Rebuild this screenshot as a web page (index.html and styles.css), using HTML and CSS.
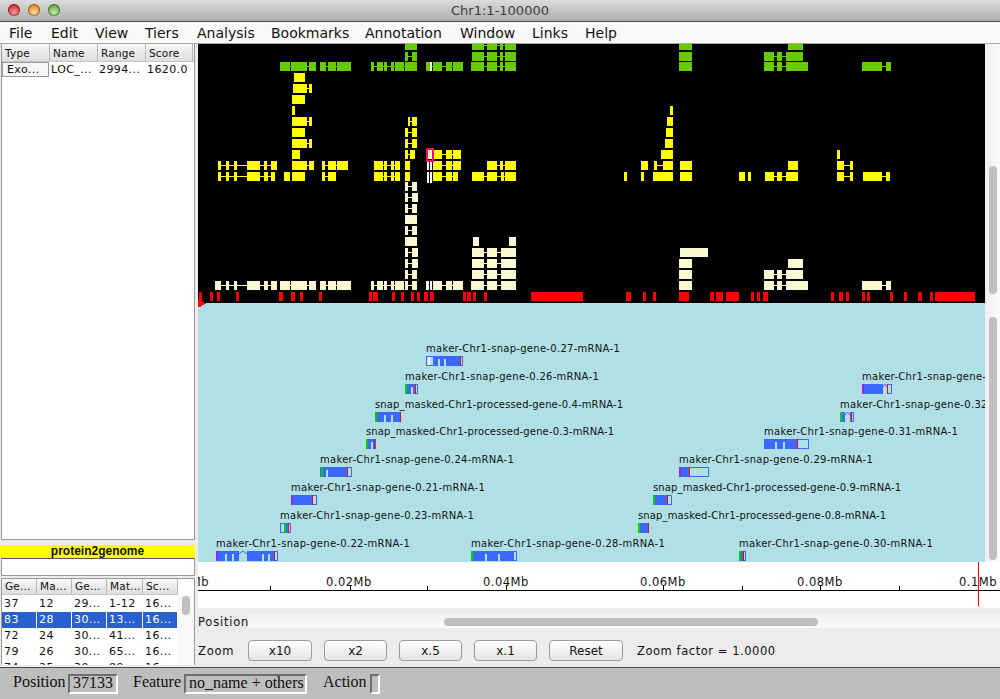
FILE: index.html
```html
<!DOCTYPE html>
<html lang="en">
<head>
    <meta charset="UTF-8">
    <title>Chr1:1-100000</title>
    <link rel="stylesheet" href="styles.css">
</head>
<body>
    <div class="titlebar">
        <div class="lights">
            <span class="light light-red"></span>
            <span class="light light-yellow"></span>
            <span class="light light-green"></span>
        </div>
        <span class="title">Chr1:1-100000</span>
    </div>
    <div class="menubar">
        <span class="menu-item m-file">File</span>
        <span class="menu-item m-edit">Edit</span>
        <span class="menu-item m-view">View</span>
        <span class="menu-item m-tiers">Tiers</span>
        <span class="menu-item m-analysis">Analysis</span>
        <span class="menu-item m-bookmarks">Bookmarks</span>
        <span class="menu-item m-annotation">Annotation</span>
        <span class="menu-item m-window">Window</span>
        <span class="menu-item m-links">Links</span>
        <span class="menu-item m-help">Help</span>
    </div>
    <div class="main">
        <div class="sidebar">
            <div class="panel panel-features">
                <div class="thead">
                    <span class="th col-a">Type</span>
                    <span class="th col-b">Name</span>
                    <span class="th col-c">Range</span>
                    <span class="th col-d">Score</span>
                </div>
                <div class="row">
                    <span class="cell cell-a cell-focus">Exo...</span>
                    <span class="cell col-b">LOC_...</span>
                    <span class="cell col-c">2994...</span>
                    <span class="cell col-d">1620.0</span>
                </div>
            </div>
            <div class="type-label">protein2genome</div>
            <div class="type-box"></div>
            <div class="panel panel-matches">
                <div class="thead">
                    <span class="th col-1">Ge...</span>
                    <span class="th col-2">Ma...</span>
                    <span class="th col-3">Ge...</span>
                    <span class="th col-4">Mat...</span>
                    <span class="th col-5">Sc...</span>
                </div>
                <div class="match-body">
                    <div class="match-rows">
                        <div class="row"><span class="cell col-1">37</span><span class="cell col-2">12</span><span class="cell col-3">29...</span><span class="cell col-4">1-12</span><span class="cell col-5">16...</span></div>
                        <div class="row row-sel"><span class="cell col-1">83</span><span class="cell col-2">28</span><span class="cell col-3">30...</span><span class="cell col-4">13...</span><span class="cell col-5">16...</span></div>
                        <div class="row"><span class="cell col-1">72</span><span class="cell col-2">24</span><span class="cell col-3">30...</span><span class="cell col-4">41...</span><span class="cell col-5">16...</span></div>
                        <div class="row"><span class="cell col-1">79</span><span class="cell col-2">26</span><span class="cell col-3">30...</span><span class="cell col-4">65...</span><span class="cell col-5">16...</span></div>
                        <div class="row"><span class="cell col-1">74</span><span class="cell col-2">25</span><span class="cell col-3">30...</span><span class="cell col-4">89...</span><span class="cell col-5">16...</span></div>
                    </div>
                    <div class="match-scroll"><div class="match-thumb"></div></div>
                </div>
            </div>
        </div>
        <div class="content">
            <div class="tier-row">
                <svg id="results" class="tier" width="787" height="259" viewBox="0 44 787 259"></svg>
                <div class="vscroll vscroll-top"><div class="thumb thumb-top"></div></div>
            </div>
            <div class="tier-row">
                <svg id="genes" class="tier tier-genes" width="787" height="259" viewBox="198 303 787 259"></svg>
                <div class="vscroll vscroll-bottom"><div class="thumb thumb-bottom"></div></div>
            </div>
            <svg id="ruler" class="ruler" width="802" height="46" viewBox="198 562 802 46">
                <text class="tick-label" x="171" y="586">0.0Mb</text>
                <text class="tick-label" x="326" y="586">0.02Mb</text>
                <text class="tick-label" x="483" y="586">0.04Mb</text>
                <text class="tick-label" x="640" y="586">0.06Mb</text>
                <text class="tick-label" x="797" y="586">0.08Mb</text>
                <text class="tick-label" x="959" y="586">0.1Mb</text>
                <rect class="axis" x="198" y="590" width="802" height="1"/>
                <rect class="axis" x="270" y="586" width="1" height="4"/>
                <rect class="axis" x="350" y="585" width="1" height="5"/>
                <rect class="axis" x="427" y="586" width="1" height="4"/>
                <rect class="axis" x="506" y="585" width="1" height="5"/>
                <rect class="axis" x="663" y="585" width="1" height="5"/>
                <rect class="axis" x="742" y="586" width="1" height="4"/>
                <rect class="axis" x="820" y="585" width="1" height="5"/>
                <rect class="axis" x="899" y="586" width="1" height="4"/>
                <rect class="cursor" x="978" y="562" width="1" height="44"/>
            </svg>
            <div class="controls">
                <div class="control-row position-row">
                    <span class="control-label">Position</span>
                    <div class="hscroll"><div class="hthumb"></div></div>
                </div>
                <div class="control-row zoom-row">
                    <span class="control-label">Zoom</span>
                    <button class="btn btn-first">x10</button>
                    <button class="btn">x2</button>
                    <button class="btn">x.5</button>
                    <button class="btn">x.1</button>
                    <button class="btn btn-reset">Reset</button>
                    <span class="zoom-factor">Zoom factor = 1.0000</span>
                </div>
            </div>
        </div>
    </div>
    <div class="statusbar">
        <span class="status-label s-position">Position</span>
        <span class="field field-position">37133</span>
        <span class="status-label s-feature">Feature</span>
        <span class="field field-feature">no_name + others</span>
        <span class="status-label s-action">Action</span>
        <span class="field field-action"></span>
    </div>
    <script src="main.js"></script>
</body>
</html>
```
FILE: styles.css
```css
html, body {
    margin: 0;
    padding: 0;
}
body {
    width: 1000px;
    height: 699px;
    overflow: hidden;
    display: flex;
    flex-direction: column;
    background-color: #ececec;
    font-family: "DejaVu Sans", sans-serif;
    color: #111;
}

/* window title */
.titlebar {
    height: 21px;
    flex: none;
    position: relative;
    display: flex;
    justify-content: center;
    align-items: center;
    background: linear-gradient(#dcdcdc, #aeaeae);
    border-bottom: 1px solid #505050;
}
.lights {
    position: absolute;
    left: 8px;
    top: 4px;
    display: flex;
    gap: 8px;
}
.light {
    width: 12px;
    height: 12px;
    border-radius: 50%;
    box-shadow: inset 0 0 0 1px rgba(0, 0, 0, 0.35);
}
.light-red { background: radial-gradient(circle at 50% 70%, #f4a0a0, #cf2a2f 70%); }
.light-yellow { background: radial-gradient(circle at 50% 70%, #f9dca0, #d98a22 70%); }
.light-green { background: radial-gradient(circle at 50% 70%, #c8eeb0, #5da83f 70%); }
.title {
    font-size: 13px;
    color: #3c3c3c;
}

/* menu */
.menubar {
    height: 21px;
    flex: none;
    display: flex;
    align-items: center;
    background-color: #fafafa;
    border-bottom: 1px solid #a8a8a8;
    font-size: 14px;
}
.menu-item { flex: none; }
.m-file { margin-left: 9px; width: 42px; }
.m-edit { width: 44px; }
.m-view { width: 50px; }
.m-tiers { width: 52px; }
.m-analysis { width: 74px; }
.m-bookmarks { width: 94px; }
.m-annotation { width: 95px; }
.m-window { width: 72px; }
.m-links { width: 53px; }

/* left side */
.main {
    height: 623px;
    flex: none;
    display: flex;
}
.sidebar {
    width: 195px;
    flex: none;
    margin-right: 3px;
    display: flex;
    flex-direction: column;
}
.panel {
    margin-left: 1px;
    background-color: #fff;
    border: 1px solid #9a9a9a;
    overflow: hidden;
    font-size: 11px;
}
.panel-features {
    height: 495px;
    border-top: none;
}
.thead {
    height: 17px;
    display: flex;
    background: linear-gradient(#f8f8f8, #dedede);
    border-bottom: 1px solid #c4c4c4;
    line-height: 19px;
    font-size: 10.5px;
    letter-spacing: 0.2px;
}
.th {
    flex: none;
    box-sizing: border-box;
    padding-left: 3px;
    border-right: 1px solid #b8b8b8;
    white-space: nowrap;
    overflow: hidden;
}
.row {
    height: 16px;
    display: flex;
    line-height: 16px;
}
.cell {
    flex: none;
    box-sizing: border-box;
    padding-left: 2px;
    white-space: nowrap;
    overflow: hidden;
    letter-spacing: 0.4px;
}
.col-a { width: 48px; }
.col-b { width: 48px; }
.col-c { width: 48px; }
.col-d { width: 47px; }
.cell-a { width: 47px; }
.panel-features .cell-focus {
    padding-left: 4px;
    line-height: 13px;
    border: 1px solid #9a9a9a;
    background-color: #f6f6f6;
    height: 15px;
}
.col-1 { width: 35px; }
.col-2 { width: 35px; }
.col-3 { width: 35px; }
.col-4 { width: 36px; }
.col-5 { width: 35px; }
.type-label {
    margin-top: 5px;
    height: 13px;
    flex: none;
    background-color: #ffff00;
    text-align: center;
    font-family: "Liberation Sans", Arial, sans-serif;
    font-size: 12px;
    font-weight: bold;
    line-height: 13px;
}
.type-box {
    height: 16px;
    flex: none;
    margin-left: 1px;
    background-color: #fff;
    border: 1px solid #9a9a9a;
    border-top-color: #555;
}
.panel-matches {
    margin-top: 2px;
    height: 86px;
    flex: none;
    border-bottom: none;
}
.panel-matches .thead {
    height: 15px;
    line-height: 15px;
    margin-right: 16px;
}
.match-body {
    display: flex;
}
.match-rows {
    width: 176px;
    flex: none;
    padding-top: 1px;
}
.row-sel {
    color: #fff;
}
.row-sel .cell {
    background-color: #2a5fcf;
    border-right: 1px solid #fff;
}
.match-scroll {
    flex: 1;
    padding: 1px 0 0 4px;
    background-color: #f8f8f8;
}
.match-thumb {
    width: 8px;
    height: 19px;
    border-radius: 4px;
    background-color: #c0c0c0;
}

/* tiers */
.content {
    width: 802px;
    flex: none;
    display: flex;
    flex-direction: column;
}
.tier-row {
    height: 259px;
    flex: none;
    display: flex;
}
.tier {
    display: block;
    flex: none;
    background-color: #000;
}
.tier-genes {
    background-color: #b0e0e6;
}
.vscroll {
    width: 15px;
    box-sizing: border-box;
    flex: none;
    padding-left: 4px;
    background: linear-gradient(90deg, #f0f0f0, #fafafa);
}
.thumb {
    width: 8px;
    border-radius: 4px;
    background-color: #c0c0c0;
}
.vscroll-top { padding-top: 122px; }
.thumb-top { height: 128px; }
.vscroll-bottom { padding-top: 14px; }
.thumb-bottom { height: 243px; }
.f-green { fill: #66cc00; }
.f-yellow { fill: #ffff00; }
.f-cream { fill: #fafad2; }
.f-red { fill: #ff0000; }
.f-white { fill: #ffffff; }
.f-pink { fill: none; stroke: #ff0066; stroke-width: 2; }
.g-blue { fill: #3b68ff; }
.g-box { fill: none; stroke: #3b68ff; stroke-width: 1; }
.g-chevron { fill: none; stroke: #3b68ff; stroke-width: 1; }
.g-teal { fill: #b0e0e6; }
.g-start-green { fill: #00d000; }
.g-start-purple { fill: #a020f0; }
.g-stop { fill: #ff0000; }
.g-label {
    font-family: "DejaVu Sans", sans-serif;
    font-size: 10px;
    letter-spacing: 0.29px;
    fill: #111;
}
.g-label-snap {
    letter-spacing: 0.14px;
}

/* ruler */
.ruler {
    display: block;
    flex: none;
    background-color: #fff;
}
.tick-label {
    font-family: "DejaVu Sans", sans-serif;
    font-size: 11.5px;
    letter-spacing: 0.5px;
    fill: #111;
}
.axis { fill: #000; }
.cursor { fill: #ff0000; }

/* position and zoom */
.controls {
    flex: 1;
    font-size: 11.5px;
}
.control-row {
    display: flex;
    align-items: center;
}
.position-row {
    height: 14px;
    margin-top: 6px;
}
.position-row .control-label {
    padding-top: 2px;
}
.zoom-row {
    margin-top: 12px;
    height: 21px;
}
.control-label {
    width: 50px;
    flex: none;
    letter-spacing: 0.8px;
}
.hscroll {
    flex: 1;
    height: 14px;
    box-sizing: border-box;
    padding: 4px 0 0 196px;
    background: linear-gradient(#f2f2f2, #fafafa);
}
.hthumb {
    width: 374px;
    height: 8px;
    border-radius: 4px;
    background-color: #bebebe;
}
.btn {
    width: 63px;
    height: 21px;
    box-sizing: border-box;
    flex: none;
    margin: 0 12px 0 0;
    padding: 0;
    border: 1px solid #9c9c9c;
    border-radius: 4px;
    background: linear-gradient(#ffffff, #e4e4e4);
    font-family: "DejaVu Sans", sans-serif;
    font-size: 12px;
    color: #111;
}
.btn-first { width: 64px; }
.btn-reset {
    width: 74px;
    margin-right: 14px;
}
.zoom-factor {
    letter-spacing: 0.55px;
}

/* status line */
.statusbar {
    height: 31px;
    flex: none;
    display: flex;
    align-items: center;
    background-color: #bebebe;
    border-top: 1px solid #4a4a4a;
    font-family: "Liberation Serif", "Times New Roman", serif;
    font-size: 16px;
}
.status-label {
    flex: none;
    padding-bottom: 3px;
}
.s-position { margin-left: 13px; width: 55px; }
.s-feature { margin-left: 15px; width: 51px; }
.s-action { margin-left: 16px; width: 47px; }
.field {
    box-sizing: border-box;
    height: 20px;
    flex: none;
    padding-left: 3px;
    line-height: 14px;
    border: 2px solid;
    border-color: #6e6e6e #fff #fff #6e6e6e;
    white-space: nowrap;
}
.field-position { width: 50px; }
.field-feature { width: 123px; }
.field-action { width: 10px; padding: 0; }
```
FILE: main.js
```js
// Draws the result tiers and the gene tier.
const NS = 'http://www.w3.org/2000/svg';

function rect(parent, cls, x, y, w, h) {
    const r = document.createElementNS(NS, 'rect');
    r.setAttribute('class', cls);
    r.setAttribute('x', x);
    r.setAttribute('y', y);
    r.setAttribute('width', w);
    r.setAttribute('height', h);
    parent.appendChild(r);
}

// "a-b c-d|e-f": exons joined by a thin line inside a group, groups split by |
function drawRow(svg, cls, y, spec) {
    spec.split('|').forEach(function (group) {
        const exons = group.trim().split(' ').map(function (s) {
            return s.split('-').map(Number);
        });
        const first = exons[0][0];
        const last = exons[exons.length - 1][1];
        if (exons.length > 1) {
            rect(svg, cls, first, y + 4, last - first, 1);
        }
        exons.forEach(function (e) {
            rect(svg, cls, e[0], y, e[1] - e[0], 9);
        });
    });
}

const results = document.getElementById('results');

const B = '274-286 289-299 302-305 307-318';
const C = '274-286 289-299 303-318';
const tierRows = [
    ['f-green', 41, '207-219|' + B + '|481-494|590-605'],
    ['f-green', 52, '207-210 214-219|' + B + '|481-494|566-576 579-584 588-605'],
    ['f-green', 62, '82-92 93-109 111-118|122-128 130-138 139-153|173-176 179-185 186-189 193-196 197-206 207-219|228-234 235-244 248-254 255-265|273-286 289-299 302-305 307-318|481-494|566-576 579-584 588-610|664-684 688-693'],
    ['f-yellow', 73, '96-107'],
    ['f-yellow', 84, '95-109 111-114'],
    ['f-yellow', 95, '94-107'],
    ['f-yellow', 106, '94-97|472-475'],
    ['f-yellow', 117, '94-109 111-114|210-212 214-219|469-475'],
    ['f-yellow', 128, '94-107|207-210 214-219|468-475'],
    ['f-yellow', 139, '94-109 111-114|207-210 214-219|467-475'],
    ['f-yellow', 150, '94-102|207-210 212-217|229-235|235-244 248-254 255-263|463-475|639-642'],
    ['f-yellow', 161, '20-23 28-31 36-39 49-62 66-69 73-79|94-109 111-116|124-127 130-138 139-150|176-185 186-189 193-196 197-202|207-212|235-244 248-254 255-263|289-299 302-305 307-318|443-450|456-459 465-475|482-494|590-600|639-646 652-655'],
    ['f-yellow', 172, '20-23 28-31 36-39 49-62 66-70 73-77|86-92|94-107|124-127 130-138|176-185 186-189 193-196 197-202|207-212|235-244 248-254 255-260|274-286 289-299 303-306 307-318|426-429|443-446|455-475|482-494|541-547|550-553|567-576 579-584 588-600|639-646 652-655|665-684 688-692'],
    ['f-cream', 182, '207-210 214-219'],
    ['f-cream', 193, '207-210 214-220'],
    ['f-cream', 204, '207-210 214-219'],
    ['f-cream', 215, '207-219'],
    ['f-cream', 226, '207-210 214-219'],
    ['f-cream', 237, '207-219|275-281|311-318'],
    ['f-cream', 248, '207-210 214-220|' + C + '|482-510'],
    ['f-cream', 259, '207-210 214-220|' + C + '|481-494|590-605'],
    ['f-cream', 270, '207-210 214-219|' + C + '|481-494|566-576 579-584 588-605'],
    ['f-cream', 281, '17-23 28-31 36-39 49-62 66-70 73-79|82-92 93-109 111-118|122-128 130-138 139-153|173-176 179-185 186-189 193-196 197-206|207-210 214-219|235-244 248-254 255-265|273-286 289-299 303-318|481-494|566-576 579-584 588-610|664-684 688-693'],
    ['f-red', 292, '1-4|12-15|19-22|38-41|81-85|93-97|102-105|121-124|171-174|175-180|194-197|203-206|213-216|219-222|226-230|232-236|265-268|269-273|275-278|286-289|333-385|428-433|445-448|455-458|481-491|512-516|518-525|528-541|553-556|559-562|565-570|633-636|641-645|648-651|664-667|669-672|692-695|706-709|720-724|732-735|737-777']
];
tierRows.forEach(function (r) {
    drawRow(results, r[0], r[1], r[2]);
});

// selected exon, its white bars
rect(results, 'f-white', 232, 62, 2, 9);
rect(results, 'f-white', 229, 150, 2, 9);
rect(results, 'f-white', 232, 150, 2, 9);
rect(results, 'f-white', 229, 161, 2, 9);
rect(results, 'f-white', 232, 161, 2, 9);
rect(results, 'f-white', 229, 172, 2, 9);
rect(results, 'f-white', 232, 172, 2, 9);
rect(results, 'f-white', 229, 181, 2, 2);
rect(results, 'f-white', 232, 181, 2, 2);
rect(results, 'f-cream', 228, 281, 3, 9);
rect(results, 'f-white', 229, 281, 2, 9);
rect(results, 'f-white', 232, 281, 2, 9);
rect(results, 'f-pink', 229, 149, 6, 12);

const genesSvg = document.getElementById('genes');

// red start arrow, half on each tier
[[299, 3], [300, 4], [301, 5], [302, 6]].forEach(function (s) {
    rect(results, 'f-red', 0, s[0], s[1], 1);
});
[[303, 8], [304, 6], [305, 4], [306, 3]].forEach(function (s) {
    rect(genesSvg, 'f-red', 198, s[0], s[1], 1);
});

const genes = [
    { n: 'maker-Chr1-snap-gene-0.27-mRNA-1', x: 426, y: 356, w: 37, cds: [433, 460], gaps: [438, 444], stop: 460, bars: [428] },
    { n: 'maker-Chr1-snap-gene-0.26-mRNA-1', x: 405, y: 384, w: 13, cds: [405, 415], gaps: [411], start: 'g', stop: 415 },
    { n: 'snap_masked-Chr1-processed-gene-0.4-mRNA-1', x: 375, y: 412, w: 26, cds: [375, 400], gaps: [384, 391], start: 'g', stop: 400 },
    { n: 'snap_masked-Chr1-processed-gene-0.3-mRNA-1', x: 366, y: 439, w: 10, cds: [366, 374], gaps: [371], start: 'g', stop: 374 },
    { n: 'maker-Chr1-snap-gene-0.24-mRNA-1', x: 320, y: 467, w: 32, cds: [323, 347], gaps: [326], start: 'g', startX: 321, stop: 347 },
    { n: 'maker-Chr1-snap-gene-0.21-mRNA-1', x: 291, y: 495, w: 26, cds: [291, 312], gaps: [], start: 'p', stop: 312 },
    { n: 'maker-Chr1-snap-gene-0.23-mRNA-1', x: 280, y: 523, w: 11, cds: [285, 288], gaps: [], start: 'g', startX: 284, stop: 288 },
    { n: 'maker-Chr1-snap-gene-0.22-mRNA-1', x: 216, y: 551, w: 62, cds: [216, 274], gaps: [225, 232, 262, 268], wide: [[239, 247]], start: 'p', stop: 274 },
    { n: 'maker-Chr1-snap-gene-0.28-mRNA-1', x: 471, y: 551, w: 46, cds: [471, 514], gaps: [485, 498], start: 'g' },
    { n: 'maker-Chr1-snap-gene-0.30-mRNA-1', x: 739, y: 551, w: 7, cds: [739, 743], gaps: [], start: 'g', stop: 743 },
    { n: 'snap_masked-Chr1-processed-gene-0.8-mRNA-1', x: 638, y: 523, w: 11, cds: [638, 648], gaps: [], start: 'g', stop: 648 },
    { n: 'snap_masked-Chr1-processed-gene-0.9-mRNA-1', x: 653, y: 495, w: 19, cds: [653, 667], gaps: [], start: 'g', stop: 667 },
    { n: 'maker-Chr1-snap-gene-0.29-mRNA-1', x: 679, y: 467, w: 30, cds: [679, 689], gaps: [], start: 'p', stop: 689 },
    { n: 'maker-Chr1-snap-gene-0.31-mRNA-1', x: 764, y: 439, w: 45, cds: [764, 797], gaps: [775, 783], stop: 797 },
    { n: 'maker-Chr1-snap-gene-0.32-mRNA-1', x: 840, y: 412, w: 14, cds: [840, 851], gaps: [], wide: [[845, 850]], start: 'g', stop: 851 },
    { n: 'maker-Chr1-snap-gene-0.33-mRNA-1', x: 862, y: 384, w: 30, cds: [862, 887], gaps: [], wide: [[883, 887]], start: 'p', stop: 887 }
];

genes.forEach(function (g) {
    const label = document.createElementNS(NS, 'text');
    const snap = g.n.indexOf('snap_masked') === 0;
    label.setAttribute('class', snap ? 'g-label g-label-snap' : 'g-label');
    label.setAttribute('x', g.x);
    label.setAttribute('y', g.y - 4);
    label.textContent = g.n;
    genesSvg.appendChild(label);

    rect(genesSvg, 'g-box', g.x + 0.5, g.y + 0.5, g.w - 1, 9);
    rect(genesSvg, 'g-blue', g.cds[0], g.y, g.cds[1] - g.cds[0], 10);
    g.gaps.forEach(function (x) {
        rect(genesSvg, 'g-teal', x, g.y + 3, 2, 7);
    });
    // long intron: open gap with the roof line over it
    (g.wide || []).forEach(function (w) {
        const mid = (w[0] + w[1]) / 2;
        rect(genesSvg, 'g-teal', w[0], g.y, w[1] - w[0], 10);
        const roof = document.createElementNS(NS, 'polyline');
        roof.setAttribute('class', 'g-chevron');
        roof.setAttribute('points', w[0] + ',' + (g.y + 3) + ' ' + mid + ',' + g.y + ' ' + w[1] + ',' + (g.y + 3));
        genesSvg.appendChild(roof);
    });
    (g.bars || []).forEach(function (x) {
        rect(genesSvg, 'f-white', x, g.y + 1, 2, 8);
    });
    if (g.start) {
        rect(genesSvg, g.start === 'g' ? 'g-start-green' : 'g-start-purple', g.startX || g.x, g.y, 2, 10);
    }
    if (g.stop) {
        rect(genesSvg, 'g-stop', g.stop, g.y, 1, 10);
    }
});
```
